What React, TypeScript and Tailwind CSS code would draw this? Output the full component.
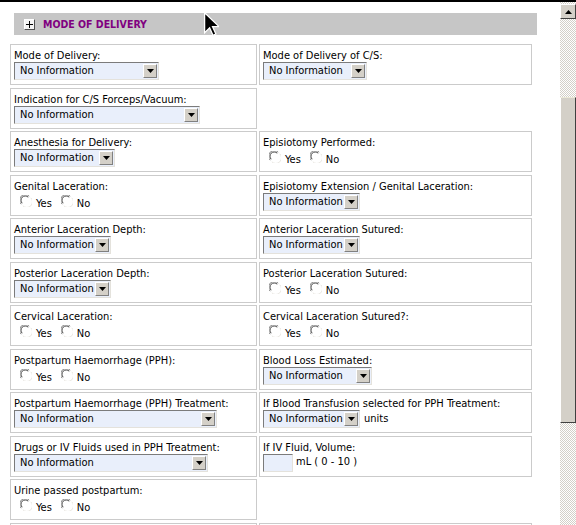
import React from 'react';

type Field =
  | { kind: 'select'; label: string; w: string; suffix?: string }
  | { kind: 'radio'; label: string }
  | { kind: 'input'; label: string; suffix: string }
  | { kind: 'blank' };

type Row = { left: Field; right?: Field };

const rows: Row[] = [
  {
    left: { kind: 'select', label: 'Mode of Delivery:', w: 'w-[145px]' },
    right: { kind: 'select', label: 'Mode of Delivery of C/S:', w: 'w-[104px]' },
  },
  { left: { kind: 'select', label: 'Indication for C/S Forceps/Vacuum:', w: 'w-[186px]' } },
  {
    left: { kind: 'select', label: 'Anesthesia for Delivery:', w: 'w-[101px]' },
    right: { kind: 'radio', label: 'Episiotomy Performed:' },
  },
  {
    left: { kind: 'radio', label: 'Genital Laceration:' },
    right: { kind: 'select', label: 'Episiotomy Extension / Genital Laceration:', w: 'w-[97px]' },
  },
  {
    left: { kind: 'select', label: 'Anterior Laceration Depth:', w: 'w-[97px]' },
    right: { kind: 'select', label: 'Anterior Laceration Sutured:', w: 'w-[97px]' },
  },
  {
    left: { kind: 'select', label: 'Posterior Laceration Depth:', w: 'w-[97px]' },
    right: { kind: 'radio', label: 'Posterior Laceration Sutured:' },
  },
  {
    left: { kind: 'radio', label: 'Cervical Laceration:' },
    right: { kind: 'radio', label: 'Cervical Laceration Sutured?:' },
  },
  {
    left: { kind: 'radio', label: 'Postpartum Haemorrhage (PPH):' },
    right: { kind: 'select', label: 'Blood Loss Estimated:', w: 'w-[109px]' },
  },
  {
    left: { kind: 'select', label: 'Postpartum Haemorrhage (PPH) Treatment:', w: 'w-[203px]' },
    right: {
      kind: 'select',
      label: 'If Blood Transfusion selected for PPH Treatment:',
      w: 'w-[97px]',
      suffix: 'units',
    },
  },
  {
    left: { kind: 'select', label: 'Drugs or IV Fluids used in PPH Treatment:', w: 'w-[194px]' },
    right: { kind: 'input', label: 'If IV Fluid, Volume:', suffix: 'mL ( 0 - 10 )' },
  },
  { left: { kind: 'radio', label: 'Urine passed postpartum:' } },
  { left: { kind: 'blank' }, right: { kind: 'blank' } },
];

const sunken =
  'border border-t-[#7b7b7b] border-l-[#7b7b7b] border-r-[#e4e2dc] border-b-[#e4e2dc] bg-[#e9effb]';

const Select: React.FC<{ w: string }> = ({ w }) => (
  <div className={`flex items-center h-[18px] ${w} ${sunken}`}>
    <span className="flex-1 pl-[5px] leading-[16px] whitespace-nowrap overflow-hidden">No Information</span>
    <span className="flex items-center justify-center w-[14px] h-[14px] mr-[1px] bg-[#d4d0c8] border border-t-white border-l-white border-r-[#808080] border-b-[#808080]">
      <svg width="7" height="4" viewBox="0 0 7 4">
        <path d="M0 0h7L3.5 4z" fill="#000" />
      </svg>
    </span>
  </div>
);

const Radio: React.FC = () => (
  <svg width="12" height="12" viewBox="0 0 12 12" className="mb-[3px]">
    <circle cx="6" cy="6" r="5.5" fill="#ffffff" />
    <path d="M1.2 9.2A5.3 5.3 0 0 1 9.2 1.2" fill="none" stroke="#808080" strokeWidth="1" />
    <path d="M2.2 8.2A4 4 0 0 1 8.2 2.2" fill="none" stroke="#404040" strokeWidth="1" />
    <path d="M10.8 2.8A5.3 5.3 0 0 1 2.8 10.8" fill="none" stroke="#e8e6e0" strokeWidth="1" />
  </svg>
);

const RadioGroup: React.FC = () => (
  <div className="flex items-end h-[17px] pl-[6px] leading-[13px]">
    <Radio />
    <span className="ml-[4px]">Yes</span>
    <span className="ml-[9px] flex items-end">
      <Radio />
    </span>
    <span className="ml-[4px]">No</span>
  </div>
);

const Cell: React.FC<{ field?: Field }> = ({ field }) => {
  if (!field) return <div />;
  if (field.kind === 'blank') return <div className="h-[41px] border border-[#cbcbcb]" />;
  return (
    <div className="h-[41px] border border-[#cbcbcb] pl-[3px] pt-[4px]">
      <div className="leading-[13px] whitespace-nowrap">{field.label}</div>
      {field.kind === 'select' && (
        <div className="flex items-center">
          <Select w={field.w} />
          {field.suffix && <span className="ml-[4px]">{field.suffix}</span>}
        </div>
      )}
      {field.kind === 'radio' && <RadioGroup />}
      {field.kind === 'input' && (
        <div className="flex items-center">
          <div className={`w-[30px] h-[18px] ${sunken}`} />
          <span className="ml-[3px]">{field.suffix}</span>
        </div>
      )}
    </div>
  );
};

const Scrollbar: React.FC = () => (
  <div className="flex flex-col w-[16px] h-[523px] bg-[image:repeating-conic-gradient(#ffffff_0%_25%,#d4d0c8_0%_50%)] bg-[length:2px_2px]">
    <div className="mt-[2px] flex items-center justify-center h-[15px] bg-[#d4d0c8] border border-t-white border-l-white border-r-[#404040] border-b-[#404040]">
      <svg width="7" height="4" viewBox="0 0 7 4">
        <path d="M3.5 0L7 4H0z" fill="#000" />
      </svg>
    </div>
    <div className="h-[78px]" />
    <div className="h-[326px] bg-[#d4d0c8] border border-t-[#ece9d8] border-l-[#ffffff] border-r-[#404040] border-b-[#404040]" />
  </div>
);

export default function App() {
  return (
    <div className="relative w-[576px] h-[525px] overflow-hidden bg-white text-black text-[11px] font-['DejaVu_Sans_Condensed','Liberation_Sans',Arial,sans-serif]">
      <div className="h-[2px] bg-black" />
      <div className="flex">
        <main className="w-[560px]">
          <div className="ml-[14px] mt-[11px] w-[523px] h-[22px] bg-[#c6c6c6] flex items-center">
            <span className="ml-[10px] flex items-center justify-center w-[11px] h-[11px] bg-[#f4f4f4] border border-t-white border-l-white border-r-[#505050] border-b-[#505050]">
              <svg width="7" height="7" viewBox="0 0 7 7">
                <path d="M3 0h1v7H3zM0 3h7v1H0z" fill="#000" />
              </svg>
            </span>
            <span className="ml-[8px] mt-[2px] font-bold text-[10.5px] text-[#800080]">MODE OF DELIVERY</span>
          </div>
          <div className="ml-[10px] mt-[9px] grid grid-cols-[247px_273px] gap-x-[2px] gap-y-[2.5px]">
            {rows.map((r, i) => (
              <React.Fragment key={i}>
                <Cell field={r.left} />
                <Cell field={r.right} />
              </React.Fragment>
            ))}
          </div>
        </main>
        <Scrollbar />
      </div>
      <svg
        className="absolute left-[204px] top-[12px]"
        width="15"
        height="24"
        viewBox="0 0 12 19"
      >
        <path d="M0.5 0.5V16.5L4.5 12.5L7.2 18.5L9.5 17.5L6.8 11.5H12L0.5 0.5Z" fill="#000" stroke="#fff" strokeWidth="1" />
      </svg>
    </div>
  );
}
